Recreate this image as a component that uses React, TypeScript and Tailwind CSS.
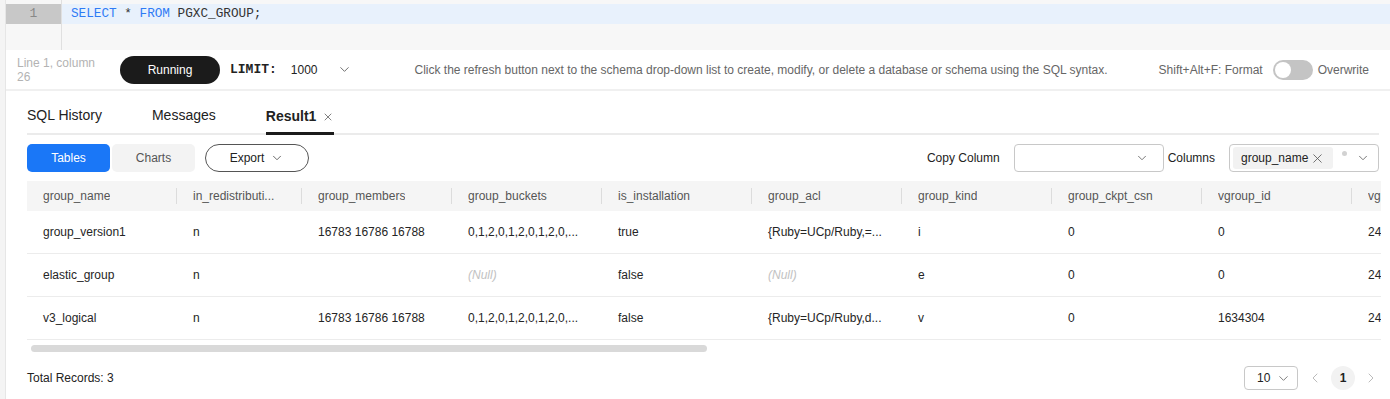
import React from "react";
import { ChevronDown, ChevronLeft, ChevronRight, X } from "lucide-react";

const columns = [
  { name: "group_name", w: "w-[150px]" },
  { name: "in_redistributi...", w: "w-[125px]" },
  { name: "group_members", w: "w-[150px]" },
  { name: "group_buckets", w: "w-[150px]" },
  { name: "is_installation", w: "w-[150px]" },
  { name: "group_acl", w: "w-[150px]" },
  { name: "group_kind", w: "w-[150px]" },
  { name: "group_ckpt_csn", w: "w-[150px]" },
  { name: "vgroup_id", w: "w-[150px]" },
  { name: "vg", w: "w-[150px]" },
];

const NULL = "(Null)";

const rows: (string | null)[][] = [
  ["group_version1", "n", "16783 16786 16788", "0,1,2,0,1,2,0,1,2,0,...", "true", "{Ruby=UCp/Ruby,=...", "i", "0", "0", "24"],
  ["elastic_group", "n", "", NULL, "false", NULL, "e", "0", "0", "24"],
  ["v3_logical", "n", "16783 16786 16788", "0,1,2,0,1,2,0,1,2,0,...", "false", "{Ruby=UCp/Ruby,d...", "v", "0", "1634304", "24"],
];

const Toggle = () => (
  <div className="flex h-[20px] w-[40px] items-center rounded-full bg-[#c4c4c4] px-[2px]">
    <div className="h-[16px] w-[16px] rounded-full bg-white" />
  </div>
);

const ResultTable = () => (
  <div className="mr-[-2px] overflow-hidden">
    <div className="w-max">
      <div className="flex h-[30px] items-center bg-[#f5f5f5] text-[12px] text-[#555]">
        {columns.map((c) => (
          <div key={c.name} className={`${c.w} relative flex h-full shrink-0 items-center pl-[16px]`}>
            <span className="truncate">{c.name}</span>
            <span className="absolute right-0 top-[7px] h-[16px] w-px bg-[#dcdcdc]" />
          </div>
        ))}
      </div>
      {rows.map((r, i) => (
        <div key={i} className="flex h-[43px] items-center border-b border-[#ececec] text-[12px] text-[#252525]">
          {r.map((v, j) => (
            <div key={j} className={`${columns[j].w} shrink-0 truncate pl-[16px]`}>
              {v === NULL ? <span className="italic text-[#c2c2c2]">(Null)</span> : v}
            </div>
          ))}
        </div>
      ))}
    </div>
  </div>
);

export default function App() {
  return (
    <div className="flex h-[399px] w-[1390px] overflow-hidden bg-white font-['Liberation_Sans',Arial,sans-serif]">
      <div className="w-[6px] shrink-0 border-r border-[#e6e6e6] bg-[#f4f4f4]" />
      <div className="flex min-w-0 flex-1 flex-col">
        {/* editor */}
        <div className="flex h-[50px] bg-[#f7f7f7]">
          <div className="w-[56px] shrink-0 border-r border-[#e0e0e0] pt-[4px]">
            <div className="flex h-[20px] items-center justify-center bg-[#c8c8c8] font-['Liberation_Mono',monospace] text-[13px] text-[#888]">
              1
            </div>
          </div>
          <div className="flex-1 pt-[4px]">
            <div className="flex h-[20px] items-center bg-[#e8f1fc] pl-[9px] font-['Liberation_Mono',monospace] text-[12.7px] text-[#333]">
              <span className="text-[#2f7bf5]">SELECT</span>&nbsp;*&nbsp;<span className="text-[#2f7bf5]">FROM</span>&nbsp;PGXC_GROUP;
            </div>
          </div>
        </div>

        {/* status bar */}
        <div className="flex h-[41px] items-center border-b-2 border-[#f0f0f0] pl-[11px] pr-[21px] text-[12px]">
          <div className="w-[88px] leading-[14px] text-[#b3b3b3]">Line 1, column 26</div>
          <button className="ml-[15px] flex h-[28px] w-[100px] items-center justify-center rounded-full bg-[#1b1b1b] text-white">
            Running
          </button>
          <span className="ml-[10px] font-['Liberation_Mono',monospace] text-[13px] font-bold text-[#222]">LIMIT:</span>
          <span className="ml-[14px] text-[#222]">1000</span>
          <ChevronDown size={15} strokeWidth={1.5} className="ml-[19px] text-[#666]" />
          <span className="ml-[63px] text-[#666]">
            Click the refresh button next to the schema drop-down list to create, modify, or delete a database or schema using the SQL syntax.
          </span>
          <span className="ml-auto text-[#666]">Shift+Alt+F: Format</span>
          <div className="ml-[10px]">
            <Toggle />
          </div>
          <span className="ml-[5px] text-[#666]">Overwrite</span>
        </div>

        {/* results */}
        <div className="flex min-h-0 flex-1 flex-col pl-[21px] pr-[11px]">
          <div className="mt-[9px] flex h-[35px] items-end gap-[50px] border-b-2 border-[#ebebeb] text-[14px] text-[#222]">
            <div className="pb-[7px]">SQL History</div>
            <div className="pb-[7px]">Messages</div>
            <div className="mb-[-2px] flex items-center gap-[6px] border-b-[3px] border-[#1b1b1b] pb-[5px] font-bold">
              Result1 <X size={12} strokeWidth={1.5} className="text-[#555]" />
            </div>
          </div>

          <div className="mt-[9px] flex h-[28px] items-center text-[12px]">
            <button className="flex h-[28px] w-[83px] items-center justify-center rounded-[5px] bg-[#1a77f7] text-white">
              Tables
            </button>
            <button className="ml-[2px] flex h-[28px] w-[83px] items-center justify-center rounded-[5px] bg-[#f3f3f3] text-[#555]">
              Charts
            </button>
            <button className="ml-[10px] flex h-[28px] w-[104px] items-center justify-center gap-[6px] rounded-full border border-[#555] text-[#222]">
              Export <ChevronDown size={14} strokeWidth={1.5} className="text-[#555]" />
            </button>
            <span className="ml-auto text-[#222]">Copy Column</span>
            <div className="ml-[14px] flex h-[28px] w-[150px] items-center justify-end rounded-[4px] border border-[#c8c8c8] pr-[14px]">
              <ChevronDown size={14} strokeWidth={1.5} className="text-[#666]" />
            </div>
            <span className="ml-[4px] text-[#222]">Columns</span>
            <div className="ml-[14px] flex h-[28px] w-[150px] items-center rounded-[4px] border border-[#c8c8c8] px-[3px]">
              <div className="flex h-[22px] items-center gap-[2px] rounded-[3px] bg-[#f2f2f2] pl-[8px] pr-[8px] text-[#222]">
                group_name <X size={15} strokeWidth={1.3} className="text-[#555]" />
              </div>
              <span className="mb-[10px] ml-[9px] h-[5px] w-[5px] rounded-full bg-[#d2d2d2]" />
              <ChevronDown size={14} strokeWidth={1.5} className="ml-[9px] text-[#666]" />
            </div>
          </div>

          <div className="mt-[9px]">
            <ResultTable />
          </div>

          <div className="mt-[5px] h-[7px] w-[676px] translate-x-[4px] rounded-full bg-[#d9d9d9]" />

          <div className="mt-[13px] flex h-[26px] items-center text-[12px] text-[#222]">
            <span>Total Records: 3</span>
            <div className="ml-auto flex h-[24px] w-[54px] items-center justify-between rounded-[4px] border border-[#c8c8c8] pl-[12px] pr-[6px]">
              10 <ChevronDown size={15} strokeWidth={1.5} className="text-[#777]" />
            </div>
            <ChevronLeft size={16} strokeWidth={1.5} className="ml-[9px] text-[#bbb]" />
            <div className="ml-[8px] flex h-[24px] w-[24px] items-center justify-center rounded-full bg-[#f2f2f2] font-bold">
              1
            </div>
            <ChevronRight size={16} strokeWidth={1.5} className="ml-[8px] text-[#bbb]" />
          </div>
        </div>
      </div>
    </div>
  );
}
